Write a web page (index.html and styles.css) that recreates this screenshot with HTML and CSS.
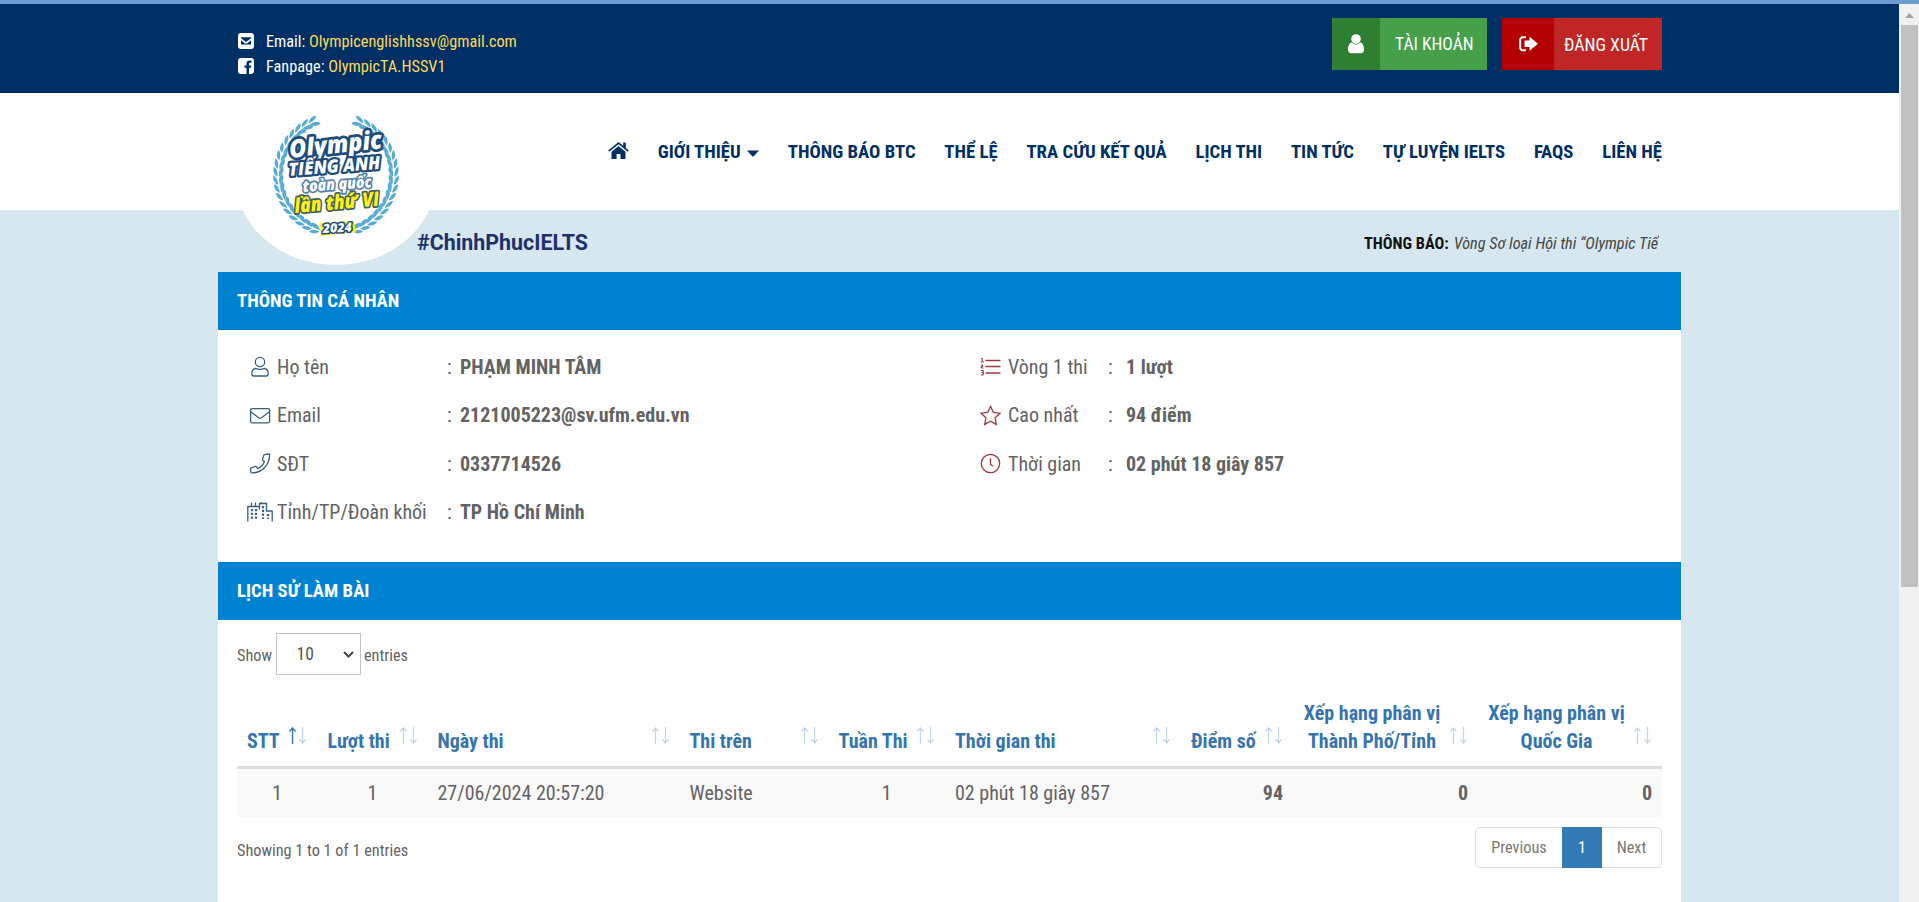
FILE: index.html
```
<!DOCTYPE html>
<html lang="vi">
<head>
<meta charset="utf-8">
<title>Olympic Tiếng Anh</title>
<link rel="stylesheet" href="styles.css">
</head>
<body>
<svg width="0" height="0" class="defs">
  <defs>
    <symbol id="sort" viewBox="0 0 17 17">
      <path class="up" d="M3.5 17V1M0.5 4.5 3.5 1l3 3.500"/>
      <path class="down" d="M13.500 0v16M10.500 12.500l3 3.500 3-3.500"/>
    </symbol>
    <g id="leaf">
      <path d="M4 58.500Q1 64 -6 62.500Q-4 58 4 58.500Z"/>
      <path d="M4 57Q-2 50.500 -7 53.500Q-4 58.500 4 57Z"/>
    </g>
    <g id="branch">
      <use href="#leaf" transform="rotate(20)"/><use href="#leaf" transform="rotate(28)"/>
      <use href="#leaf" transform="rotate(36)"/><use href="#leaf" transform="rotate(44)"/>
      <use href="#leaf" transform="rotate(52)"/><use href="#leaf" transform="rotate(60)"/>
      <use href="#leaf" transform="rotate(68)"/><use href="#leaf" transform="rotate(76)"/>
      <use href="#leaf" transform="rotate(84)"/><use href="#leaf" transform="rotate(92)"/>
      <use href="#leaf" transform="rotate(100)"/><use href="#leaf" transform="rotate(108)"/>
      <use href="#leaf" transform="rotate(116)"/><use href="#leaf" transform="rotate(124)"/>
      <use href="#leaf" transform="rotate(132)"/><use href="#leaf" transform="rotate(140)"/>
      <use href="#leaf" transform="rotate(148)"/><use href="#leaf" transform="rotate(156)"/>
    </g>
  </defs>
</svg>
<div class="window">
<div class="edge"></div>
<div class="viewport">
<div class="page">
  <header class="topbar">
    <div class="container topbar-in">
      <ul class="contact">
        <li><svg width="16" height="16" viewBox="0 0 16 16"><rect width="16" height="16" rx="3" fill="#fff"/><path d="M3 4.300h10v1L8 9 3 5.300z" fill="#002f66"/><path d="M3 7.300l3.800 2.900q1.200.8 2.400 0L13 7.300V11.500H3z" fill="#002f66"/></svg><span>Email: <a>Olympicenglishhssv@gmail.com</a></span></li>
        <li><svg width="16" height="16" viewBox="0 0 16 16"><path fill="#fff" d="M3 0h10a3 3 0 0 1 3 3v10a3 3 0 0 1-3 3h-2V9.800h2l.4-2.400H11V6c0-.8.300-1.200 1.200-1.200h1.200V2.600c-3.300-.5-4.900.3-4.900 3v1.800h-2v2.400h2V16H3a3 3 0 0 1-3-3V3a3 3 0 0 1 3-3z"/></svg><span>Fanpage: <a>OlympicTA.HSSV1</a></span></li>
      </ul>
      <div class="actions">
        <a class="btn green"><i><svg width="16" height="20" viewBox="0 0 16 20"><circle cx="8" cy="5" r="4.800" fill="#fff"/><path fill="#fff" d="M3.800 8.600C5.500 11 10.500 11 12.200 8.600 15 9 16 12.500 16 15.500c0 2.500-1.200 3.800-3 3.800H3c-1.800 0-3-1.300-3-3.800 0-3 1-6.500 3.800-6.900z"/></svg></i><b>TÀI KHOẢN</b></a>
        <a class="btn red"><i><svg width="19" height="16" viewBox="0 0 19 16"><path d="M7 1.200H3.700A2.500 2.500 0 0 0 1.200 3.700v8.100a2.500 2.500 0 0 0 2.500 2.500H7" fill="none" stroke="#fff" stroke-width="2"/><path fill="#fff" d="M5.500 4.500h5V.8L19 7.800l-8.500 7V11h-5z"/></svg></i><b>ĐĂNG XUẤT</b></a>
      </div>
    </div>
  </header>
  <div class="navbar">
    <div class="container nav-in">
      <div class="logo">
        <svg width="140" height="140" viewBox="-70 -70 140 140">
          <g fill="#58abd6"><use href="#branch"/><use href="#branch" transform="scale(-1 1)"/></g>
          <g class="logo-text">
            <text transform="translate(-46 -17) rotate(-6)" font-size="25" textLength="93" lengthAdjust="spacingAndGlyphs" stroke-width="5.500">Olympic</text>
            <text transform="translate(-47 1) rotate(-4.500)" font-size="18" textLength="92" lengthAdjust="spacingAndGlyphs" stroke-width="4.500">TIẾNG ANH</text>
            <text transform="translate(-33 17) rotate(-4)" font-size="16" textLength="69" lengthAdjust="spacingAndGlyphs" stroke-width="3.500" class="soft">toàn quốc</text>
            <text transform="translate(-41 38) rotate(-5)" font-size="20" textLength="85" lengthAdjust="spacingAndGlyphs" stroke-width="3.500" class="yellow">lần thứ VI</text>
            <path d="M-16 48 18 46 20 57-15 61z" fill="#ffee1a"/>
            <text transform="translate(-13 58) rotate(-3)" font-size="12.500" textLength="29" lengthAdjust="spacingAndGlyphs" stroke-width="3">2024</text>
          </g>
        </svg>
      </div>
      <nav class="menu">
        <a><svg class="home" width="21" height="17" viewBox="0 0 21 17"><path fill="#002f66" d="M3.500 9.800 10.500 4l7 5.800V17h-5v-5H8.600v5H3.500z"/><path d="M.7 9.200 10.500 1.100l9.800 8.100" fill="none" stroke="#002f66" stroke-width="1.700"/><path fill="#002f66" d="M15.200.6h2.600v6l-2.600-2.200z"/></svg></a>
        <a>GIỚI THIỆU <svg class="caret" width="12" height="7" viewBox="0 0 12 7"><path fill="#002f66" d="M0 .5h12L6.500 6.500h-1z"/></svg></a>
        <a>THÔNG BÁO BTC</a><a>THỂ LỆ</a><a>TRA CỨU KẾT QUẢ</a><a>LỊCH THI</a><a>TIN TỨC</a><a>TỰ LUYỆN IELTS</a><a>FAQS</a><a>LIÊN HỆ</a>
      </nav>
    </div>
  </div>
  <div class="container ticker">
    <strong class="hashtag">#ChinhPhucIELTS</strong>
    <div class="notice"><b>THÔNG BÁO:</b><em>Vòng Sơ loại Hội thi “Olympic Tiế</em></div>
  </div>
  <main class="card">
    <h2>THÔNG TIN CÁ NHÂN</h2>
    <section class="info">
      <dl class="left">
        <div><dt><svg width="26" height="22" viewBox="0 0 26 22"><g class="ln"><circle cx="13" cy="6" r="4.700"/><path d="M8.500 12.300q4.500 2 9 0c2.400.7 3.700 2.600 3.700 5.400 0 1.600-.7 2.300-2 2.300H6.800c-1.300 0-2-.7-2-2.300 0-2.800 1.300-4.700 3.700-5.400z"/></g></svg>Họ tên</dt><dd>PHẠM MINH TÂM</dd></div>
        <div><dt><svg width="26" height="22" viewBox="0 0 26 22"><g class="ln"><rect x="3.600" y="3.600" width="19" height="14.200" rx="1.500"/><path d="M3.600 6.500l8 6.300q1.500 1 3 0l8-6.300"/></g></svg>Email</dt><dd>2121005223@sv.ufm.edu.vn</dd></div>
        <div><dt><svg width="26" height="22" viewBox="0 0 26 22"><path class="ln" d="M17.500 1.600l4.200-.6q.8 0 .9.800C22.700 12 14.500 20 4.900 19.900q-.8 0-1-.8l-.4-3.300q0-.7.700-1l4.300-1.400q.7-.2 1.100.4l1.300 1.800c3.200-1.500 5.200-3.600 6.500-6.800l-1.700-1.500q-.5-.5-.2-1.100l1.300-4q.2-.5 1-.6z"/></svg>SĐT</dt><dd>0337714526</dd></div>
        <div><dt><svg width="26" height="22" viewBox="0 0 26 22"><g class="ln"><path d="M.8 20.500V5.500h11.700v-3h7v7.500h5.700v10.500M4.500 5.500v-4M8.500 5.500v-4M14.500 2.500V1M12.500 5.500v3"/></g><path d="M5 8v10M9 8v10M16 5v13M21 13v5" stroke="#35607f" stroke-width="2.200" stroke-dasharray="2.200 1.600"/></svg>Tỉnh/TP/Đoàn khối</dt><dd>TP Hồ Chí Minh</dd></div>
      </dl>
      <dl class="right">
        <div><dt><svg width="21" height="22" viewBox="0 0 21 22"><path class="ln" d="M5.500 4.500h15M5.500 10.500h15M5.500 17h15"/><path d="M1 2.500h1.200v3M.8 6h3M.8 9h2v1.500H1.300V12H3.500M.8 14.500h2.500v2.200H1.300M3.300 16.700V19H.8" fill="none" stroke="#8f2f35" stroke-width="1"/></svg>Vòng 1 thi</dt><dd>1 lượt</dd></div>
        <div><dt><svg width="21" height="22" viewBox="0 0 21 22"><path class="ln" d="M10.500 1.300l2.800 6 6.700.9-4.900 4.600 1.200 6.600-5.800-3.200-5.800 3.200 1.200-6.600L1 8.200l6.700-.9z"/></svg>Cao nhất</dt><dd>94 điểm</dd></div>
        <div><dt><svg width="21" height="22" viewBox="0 0 21 22"><g class="ln"><circle cx="10.500" cy="10.500" r="9.200"/><path d="M10.500 5.300v6l2.500 1.900"/></g></svg>Thời gian</dt><dd>02 phút 18 giây 857</dd></div>
      </dl>
    </section>
    <h2>LỊCH SỬ LÀM BÀI</h2>
    <section class="history">
      <div class="length"><span>Show</span> <span class="select">10<svg width="11" height="7" viewBox="0 0 11 7"><path d="M1 1l4.500 4.500L10 1" fill="none" stroke="#444" stroke-width="2"/></svg></span> <span>entries</span></div>
      <table>
        <colgroup><col class="c1"><col class="c2"><col class="c3"><col class="c4"><col class="c5"><col class="c6"><col class="c7"><col class="c8"><col class="c9"></colgroup>
        <thead><tr>
          <th class="sorted">STT<svg viewBox="0 0 17 17"><path d="M3.500 17V1M0.500 4.500 3.500 1l3 3.500"/><path class="down" d="M13.500 0v16M10.500 12.500l3 3.500 3-3.500"/></svg></th>
          <th>Lượt thi<svg><use href="#sort"/></svg></th>
          <th>Ngày thi<svg><use href="#sort"/></svg></th>
          <th>Thi trên<svg><use href="#sort"/></svg></th>
          <th>Tuần Thi<svg><use href="#sort"/></svg></th>
          <th>Thời gian thi<svg><use href="#sort"/></svg></th>
          <th>Điểm số<svg><use href="#sort"/></svg></th>
          <th class="mid">Xếp hạng phân vị<br>Thành Phố/Tỉnh<svg><use href="#sort"/></svg></th>
          <th class="mid">Xếp hạng phân vị<br>Quốc Gia<svg><use href="#sort"/></svg></th>
        </tr></thead>
        <tbody><tr>
          <td class="mid">1</td><td class="mid">1</td><td>27/06/2024 20:57:20</td><td>Website</td><td class="mid">1</td><td>02 phút 18 giây 857</td><td class="num">94</td><td class="num">0</td><td class="num">0</td>
        </tr></tbody>
      </table>
      <div class="foot"><span>Showing 1 to 1 of 1 entries</span>
        <div class="pager"><a class="prev">Previous</a><a class="on">1</a><a class="next">Next</a></div>
      </div>
    </section>
  </main>
</div>
<div class="scrollbar"><svg width="20" height="21" viewBox="0 0 20 21"><path d="M6 14h9l-4.500-5z" fill="#a3a3a3"/></svg><div class="thumb"></div></div>
</div>
</div>
</body>
</html>
```
FILE: styles.css
```
* { box-sizing: border-box; }
body {
  margin: 0;
  background: #d7e7ef;
  font: 20px/28px "Roboto Condensed", Roboto, sans-serif;
  color: #636363;
}
h2, dl, dd, ul { margin: 0; padding: 0; }
svg { display: block; }
.defs { position: absolute; }
.window { height: 902px; overflow: hidden; display: flex; flex-direction: column; }
.edge { height: 4px; flex: none; background: #6b9bd0; }
.viewport { flex: 1; min-height: 0; display: flex; }
.page { flex: 1; display: flex; flex-direction: column; overflow: hidden; }
.container { width: 1425px; margin: 0 auto; }

.topbar { height: 89px; flex: none; background: #002f66; }
.topbar-in { display: flex; justify-content: space-between; }
.contact { list-style: none; padding-top: 24px; font-size: 16.25px; line-height: 25px; color: #fff; }
.contact li { display: flex; align-items: center; gap: 12px; padding-left: 1px; }
.contact span { padding-top: 1px; margin-bottom: -1px; }
.contact a { color: #ffd95a; }
.actions { display: flex; gap: 15px; padding-top: 14px; }
.btn { display: flex; height: 52px; color: #fff; font-size: 17.5px; }
.btn i { display: flex; align-items: center; justify-content: center; }
.btn b { flex: 1; font-weight: 400; line-height: 53px; }
.green { width: 155px; background: #45a049; }
.green i { width: 48px; background: #2f7f33; }
.green b { padding-left: 15px; }
.red { width: 160px; background: #c02626; font-size: 17.8px; }
.red i { width: 52px; background: #b30000; }
.red b { padding-left: 10px; }

.navbar { height: 117px; flex: none; background: #fff; }
.nav-in { position: relative; display: flex; justify-content: flex-end; }
.logo {
  position: absolute; left: -1px; top: 0; width: 200px; height: 172px;
  border-radius: 50%; background: #fff; display: flex; justify-content: center; padding-top: 12px;
}
.logo-text { font-family: "Open Sans", sans-serif; font-weight: 800; font-style: italic; }
.logo-text text { fill: #fff; stroke: #1d4b7c; paint-order: stroke; stroke-linejoin: round; }
.logo-text .soft { stroke: #5580a5; }
.logo-text .yellow { fill: #fff01c; stroke: #41605a; }
.menu {
  width: 1054px; display: flex; justify-content: space-between; align-items: center;
  padding-top: 45px; font-size: 18.75px; font-weight: 700; color: #002f66; white-space: nowrap;
}
.home { margin-bottom: 3px; }
.caret { display: inline-block; margin-left: 2px; vertical-align: 1px; }

.ticker { height: 62px; flex: none; display: flex; justify-content: space-between; padding: 18px 3px 0 180px; }
.hashtag { font: 700 21.4px/29px Roboto, sans-serif; color: #20306a; }
.notice { width: 295px; display: flex; gap: 5px; white-space: nowrap; font-size: 16.25px; line-height: 31px; color: #111; }
.notice em { flex: 1; min-width: 0; color: #444; overflow: hidden; }

.card { width: 1463px; flex: 1; margin: 0 auto; background: #fff; }
h2 { height: 58px; padding-left: 19px; background: #0082d2; color: #fff; font-size: 18.75px; font-weight: 700; line-height: 58px; }
.info { height: 232px; display: flex; padding: 13px 0 0 29px; }
dl { line-height: 48.400px; }
dl > div { display: flex; align-items: center; }
dt { display: flex; align-items: center; }
dd { font-weight: 700; }
dd::before { content: ":"; font-weight: 400; display: inline-block; }
.left { width: 733px; }
.left dt { width: 200px; gap: 4px; }
.left dd::before { width: 13px; }
.right dt { width: 128px; gap: 7px; }
.right dd::before { width: 18px; }
.ln { fill: none; stroke: #35607f; stroke-width: 1.300; }
.right .ln { stroke: #9c3a40; }

.history { padding: 13px 19px 0; }
.length { display: flex; align-items: center; gap: 3.500px; height: 42px; font-size: 16.25px; }
.length > span:not(.select) { padding-top: 3px; }
.select {
  width: 85px; height: 42px; border: 1px solid #c4c4c4; display: flex; align-items: center;
  justify-content: space-between; padding: 0 6px 0 20px; font-size: 17.5px; color: #555;
}
table { width: 1425px; margin-top: 14px; border-collapse: separate; border-spacing: 0; table-layout: fixed; }
.c1 { width: 80.500px; } .c2 { width: 110px; } .c3 { width: 252px; } .c4 { width: 149px; } .c5 { width: 116.500px; }
.c6 { width: 236px; } .c7 { width: 112px; } .c8 { width: 185px; } .c9 { width: 184px; }
th {
  position: relative; height: 80px; padding: 10px 37px 11px 10px; border-bottom: 3px solid #ddd;
  vertical-align: bottom; text-align: left; font-weight: 700; color: #3674b0; white-space: nowrap;
}
th svg { position: absolute; right: 11px; bottom: 22px; width: 17px; height: 17px; fill: none; stroke: #3674b0; stroke-width: 1.200; }
.up, .down { opacity: .3; }
.mid { text-align: center; }
th.sorted svg { right: 12px; stroke-width: 1.400; }
td { height: 48px; padding: 0 10px; background: #f9f9f9; white-space: nowrap; }
.num { text-align: right; font-weight: 700; }
.foot { display: flex; justify-content: space-between; padding-top: 10px; font-size: 16.25px; line-height: 48px; }
.pager { display: flex; height: 41px; border: 1px solid #ddd; border-radius: 5px; line-height: 40px; color: #777; }
.pager a { text-align: center; }
.prev { width: 86px; }
.on { width: 40px; margin: -1px 0; line-height: 42px; background: #337ab7; color: #fff; }
.next { width: 59px; }
.scrollbar { width: 20px; background: #f1f1f1; }
.thumb { width: 17px; height: 562px; margin-left: 2px; background: #c1c1c1; }
```
